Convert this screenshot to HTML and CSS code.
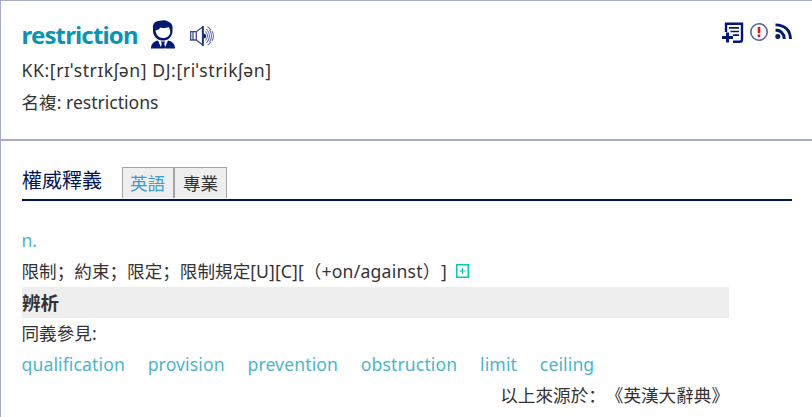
FILE: index.html
```html
<!DOCTYPE html>
<html lang="zh-Hans">
<head>
<meta charset="utf-8">
<title>restriction</title>
<link rel="stylesheet" href="styles.css">
</head>
<body>
<main class="card">
  <header class="entry">
    <div class="headline">
      <h1 class="word">restriction</h1>
      <svg class="person" width="24" height="29" viewBox="0 0 24 29">
        <path fill="#001a73" d="M2 9C1 3 5 1 9 .8 12 0 15 0 18 2c3 1.500 4 4 3.500 7v3c-1 6-5 8.500-9.500 8.500S3 18 2 12z"/>
        <path fill="#fff" d="M4.500 10.500C7 10 8.500 9 9.500 7.500c3 1 6 .5 8.500-.5l1.300 4.500c0 4-3 6.500-7.300 6.500s-7-3-7.500-7.500z"/>
        <path fill="#001a73" d="M0 28.500c0-4 2-7 7-8l3.500 8zM24 28.500c0-4-2-7-7-8l-3.500 8zM10 21.500h4l-.7 2 1 5H9.700l1-5z"/>
      </svg>
      <svg class="speaker" width="25" height="22" viewBox="0 0 25 22" fill="none" stroke="#3b4c8f">
        <path stroke-width="1.300" d="M.7 6.700h5.600L12.500 2v18l-6.200-5H.7zM3 6.700V15M6.300 7v8"/>
        <path stroke="#182b7b" stroke-width="1.600" d="M13 1v20"/>
        <path fill="#001a73" stroke="none" d="M13.500 8.500a2.500 2.500 0 0 1 0 5z"/>
        <path stroke="#6673a8" stroke-width="1.100" d="M15.500 6.500q4 4.500 0 9M16.500 4q6 7 0 14M17.500 1.700q2 1 3.500 3.300M22 6q3 5 0 10M21 17q-1.500 2.200-3.500 3.300M19.500 4.700q4 6.300 0 12.600"/>
      </svg>
      <div class="tools">
        <svg width="22" height="22" viewBox="0 0 22 22" fill="none" stroke="#001a73">
          <path stroke-width="2.400" d="M4 10V1.700h16v15.800q0 2.300-2.500 2.300H11"/>
          <path stroke-width="1.700" d="M7 5.800h10M8.500 9.500H17M11 13.200h6"/>
          <path stroke-width="3" d="M0 15.500h11M5.500 10.500v10"/>
        </svg>
        <svg class="alert" width="20" height="20" viewBox="0 0 20 20">
          <circle cx="10" cy="10" r="8.200" fill="#fff" stroke="#59659e" stroke-width="1.600"/>
          <path fill="#f00f14" d="M8.700 5h2.600v6H8.700zM8.700 12.500h2.600V15H8.700z"/>
        </svg>
        <svg class="feed" width="18" height="17" viewBox="0 0 18 17" fill="none" stroke="#001a73">
          <circle cx="2.800" cy="13.500" r="2.500" fill="#001a73" stroke="none"/>
          <path stroke-width="2.900" d="M.5 7q8.300.5 8.800 9M.5 1.900q14.500.5 15 14.100"/>
        </svg>
      </div>
    </div>
    <p class="line"><span class="ipa">KK:[rɪˈstrɪkʃən] DJ:[riˈstrikʃən]</span></p>
    <p class="line">名複: <span class="plural">restrictions</span></p>
  </header>
  <section class="meaning">
    <div class="tabs">
      <h2 class="title">權威釋義</h2>
      <span class="tab tab-active">英語</span><span class="tab">專業</span>
    </div>
    <div class="content">
      <p class="row teal">n.</p>
      <p class="row def"><span>限制；約束；限定；限制規定</span><span class="marks">[U][C][</span><span>（</span><span class="usage">+on/against</span><span>）</span><span class="close">]</span>
        <svg class="plus" width="13" height="14" viewBox="0 0 13 14" fill="none" stroke="#00c8bc"><path d="M.75.750h11.500v12.500H.75z" stroke-width="1.500"/><path d="M3.500 7h6M6.500 4v6" stroke-width="1.200"/></svg>
      </p>
      <p class="row heading">辨析</p>
      <p class="row">同義參見:</p>
      <p class="row teal synonyms"><a>qualification</a><a>provision</a><a>prevention</a><a>obstruction</a><a>limit</a><a>ceiling</a></p>
      <p class="row source">以上來源於：《英漢大辭典》</p>
    </div>
  </section>
</main>
</body>
</html>
```

FILE: styles.css
```css
* { box-sizing: border-box; }
body {
  margin: 0;
  background: #fff;
  color: #333;
  font: 17.6px/31px "Noto Sans", "Noto Sans CJK SC", sans-serif;
  text-spacing-trim: space-all;
  overflow: hidden;
}
h1, h2, p { margin: 0; font-weight: normal; }
svg { display: block; flex: none; }
.card { height: 417px; border: solid #a7abc5; border-width: 1px 0 0 1px; }
.entry { height: 140px; padding: 18px 20px 0 20.5px; border-bottom: 2px solid #a7abc5; }
.headline { display: flex; height: 35px; }
.word { width: 129.5px; font: bold 24px/31px "Noto Sans", sans-serif; letter-spacing: -0.85px; color: #0894b3; }
.person { margin-top: 1px; }
.speaker { margin: 6px 0 0 15px; }
.tools { display: flex; gap: 5px; margin: 3px -1px 0 auto; }
.alert { margin: -0.5px 1px 0 0; }
.feed { margin-top: 1px; }
.line { height: 32px; line-height: 32px; white-space: nowrap; }
.ipa { letter-spacing: 0.59px; }
.plural { letter-spacing: -0.02px; }
.meaning { padding: 26px 20px 0 21px; }
.tabs { display: flex; height: 34px; border-bottom: 2px solid #001356; }
.title { width: 100px; font-size: 20px; line-height: 28px; color: #001356; }
.tab { width: 53px; height: 31px; padding-left: 8px; border: solid #a5a5a5; border-width: 1px 1px 0; background: #eee; line-height: 31px; }
.tab-active { width: 52px; padding-left: 7px; color: #3f9bd4; }
.content { width: 707px; padding-top: 24px; }
.row { height: 31px; white-space: nowrap; }
.row:not(.heading) { margin-left: -0.5px; }
.teal { color: #4bb5cb; }
.def { display: flex; }
.marks { letter-spacing: 0.1px; }
.usage { letter-spacing: 0.22px; }
.close { margin-left: 0.5px; }
.plus { margin: 8px 0 0 9px; }
.heading { background: #eee; font-weight: bold; font-size: 18.500px; }
.synonyms { display: flex; gap: 22.8px; letter-spacing: 0.11px; }
.source { text-align: right; }
```
